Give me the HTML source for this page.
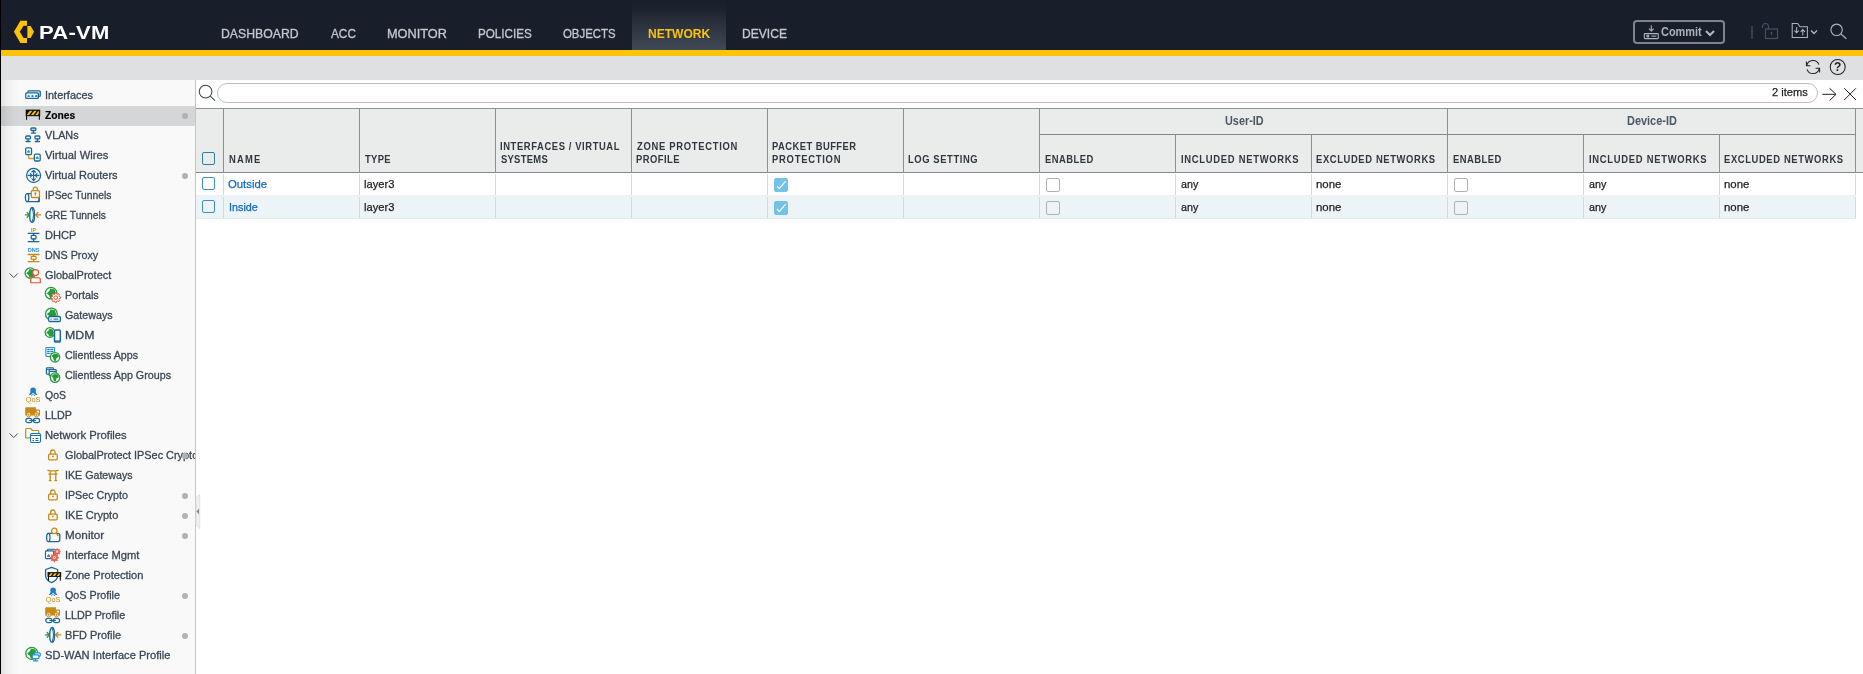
<!DOCTYPE html>
<html lang="en">
<head>
<meta charset="utf-8">
<title>PA-VM</title>
<style>
*{box-sizing:border-box;margin:0;padding:0}
html,body{width:1863px;height:674px;overflow:hidden;background:#fff}
body{font-family:"Liberation Sans",sans-serif;font-size:12px;color:#333;position:relative}
.t{position:absolute;transform-origin:0 0;white-space:nowrap;line-height:1;display:block;text-decoration:none}
svg{position:absolute;display:block;overflow:visible}
#edge{position:absolute;left:0;top:0;width:1px;height:674px;background:#000}
header{position:absolute;left:0;top:0;width:1863px;height:50px;background:#191f2a}
#ybar{position:absolute;left:0;top:50px;width:1863px;height:6px;background:#fdc20a}
#gbar{position:absolute;left:0;top:56px;width:1863px;height:24px;background:#dfe0e2}
#act{position:absolute;left:632px;top:0;width:94px;height:50px;background:linear-gradient(#191f2a 0%,#1c222d 15%,#414956 100%)}
#commit{font:inherit;color:inherit;padding:0;position:absolute;left:1633px;top:20px;width:92px;height:24px;border:2px solid #7d8590;border-radius:4px;background:transparent}
aside{position:absolute;left:1px;top:80px;width:195px;height:594px;background:#f9f9f9;border-right:1px solid #c4c7ca;overflow:hidden}
aside:before{content:"";position:absolute;left:0;top:0;width:18px;height:100%;background:linear-gradient(90deg,rgba(0,0,0,.09),rgba(0,0,0,.035) 40%,rgba(0,0,0,0));z-index:2}
aside ul{list-style:none;position:absolute;left:0;top:6px;width:194px}
aside li{position:relative;height:20px;width:194px}
aside li.sel{background:#d5d6d8}
aside li .t{color:#3a4654;-webkit-text-stroke:0.3px #3a4654}
aside li.sel .t{color:#000;-webkit-text-stroke:0.2px #000}
aside li i{z-index:3;position:absolute;left:181px;top:7px;width:6px;height:6px;border-radius:3px;background:#b2b2b2}
main{position:absolute;left:196px;top:80px;width:1667px;height:594px;background:#fff}
#search{position:absolute;left:21px;top:3px;width:1601px;height:20px;border:1px solid #bcc0c4;border-radius:10px;background:#fff}
table{margin-top:28px;border-collapse:separate;border-spacing:0;table-layout:fixed;width:1667px;border-top:1px solid #8e9398}
th{background:#eaebeb;border-right:1px solid #8a8f95;border-bottom:1px solid #83888e;font-weight:normal;text-align:left;vertical-align:top}
tr.g th{height:64px}
tr.g th.grp{height:26px}
tr.s th{height:38px}
th.last{border-right:0}
td{height:23px;vertical-align:top;background:#fff;background-image:linear-gradient(#d6d9db,#d6d9db);background-repeat:no-repeat;background-size:1px 21px;background-position:right 1px}
tr.odd td{height:23px;box-shadow:inset 0 -1px 0 #efefef}
tr.even td{background-color:#ecf4f8;box-shadow:inset 0 -1px 0 #e6ebee}
td.last{background:#fff !important;border:0 !important;box-shadow:none !important}
.cb{display:block;width:13px;height:13px;border:1.5px solid #3f90bf;border-radius:2px;background:transparent;margin:4px 0 0 6px}
.cb.h{margin-top:43px;border-color:#2a7db0}
.ck{display:block;position:relative;width:14px;height:14px;border:1px solid #adb3b7;border-radius:2px;background:transparent;margin:5px 0 0 6px}
.ck.on{background:#73c3e8;border-color:#73c3e8}
#handle{position:absolute;left:0;top:414px;width:5px;height:36px}
header,aside,main,#gbar{will-change:transform}
.t.d{-webkit-text-stroke:0.25px currentColor}
.t.n{-webkit-text-stroke:0.3px currentColor}
</style>
</head>
<body>
<header>
<div id="logo"><svg style="left:0px;top:0px" width="40" height="50" viewBox="0 0 40 50" ><path fill="#fdc20a" d="M27 20.8H20.4L13.9 31.8 20.4 42.9H27V37.9H23.6L19.8 31.8 23.6 25.8H27z"/><path fill="#fdc20a" d="M27.4 26.1H30.7L34 31.8 30.7 37.9H27.4z"/></svg><span class="t" style="left:38.52px;top:22.72px;letter-spacing:0.224px;transform:scaleX(1.1600);font-size:19px;font-weight:bold;color:#fff">PA-VM</span></div>
<nav><div id="act"></div><a class="t n" style="left:221.04px;top:27.74px;transform:scaleX(1.0206);color:#c3c8cf">DASHBOARD</a><a class="t n" style="left:330.80px;top:27.74px;transform:scaleX(0.9831);color:#c3c8cf">ACC</a><a class="t n" style="left:386.71px;top:27.74px;transform:scaleX(1.0601);color:#c3c8cf">MONITOR</a><a class="t n" style="left:477.79px;top:27.74px;transform:scaleX(0.9701);color:#c3c8cf">POLICIES</a><a class="t n" style="left:563.22px;top:27.74px;transform:scaleX(0.9489);color:#c3c8cf">OBJECTS</a><a class="t" style="left:647.65px;top:27.74px;transform:scaleX(1.0024);font-weight:bold;color:#fdc20a">NETWORK</a><a class="t n" style="left:741.56px;top:27.74px;transform:scaleX(1.0061);color:#c3c8cf">DEVICE</a></nav>
<div id="tools"><button id="commit"><svg style="left:8px;top:2px" width="16" height="16" viewBox="0 0 16 16" ><g fill="none" stroke="#aeb4bc" stroke-width="1.05"><rect x="1.300" y="9.600" width="14" height="5" rx="0.600"/><path d="M8.300 1.200V6.800M5.900 4.600L8.300 7 10.700 4.600"/><rect x="4" y="11.300" width="1.600" height="1.600"/><path d="M8.300 12.100h5"/></g></svg><span class="t" style="left:25.91px;top:4.09px;transform:scaleX(0.9100);font-weight:bold;color:#adb3bb">Commit</span><svg style="left:70px;top:8px" width="10" height="7" viewBox="0 0 10 7" ><path d="M1 1l4 4 4-4" fill="none" stroke="#b3b9c1" stroke-width="2"/></svg></button><svg style="left:1751px;top:26px" width="2" height="13" viewBox="0 0 2 13" ><path d="M1 0v13" stroke="#59626e" stroke-width="1"/></svg><svg style="left:1761px;top:22px" width="18" height="18" viewBox="0 0 18 18" ><g fill="none" stroke="#465060" stroke-width="1.2"><rect x="4.5" y="7" width="12" height="9.5"/><path d="M7.5 7V4.5a3 3 0 0 0-6 0V6"/><circle cx="10.500" cy="10.600" r="0.900" fill="#465060" stroke="none"/><path d="M10.500 11v2" stroke-width="1.1"/></g></svg><svg style="left:1791px;top:22px" width="28" height="18" viewBox="0 0 28 18" ><g fill="none" stroke="#aeb4bc" stroke-width="1.05"><path d="M1.200 15.500V1.500H6.600L9 4.700H16.400V15.500z"/><path d="M5.600 5V10.700M3.400 8.600L5.600 10.800 7.800 8.600M11.800 13.400V7.700M9.600 9.800L11.800 7.600 14 9.800"/><path d="M20 8.500l3 3 3-3" stroke-width="1.400"/></g></svg><svg style="left:1831px;top:22px" width="18" height="18" viewBox="0 0 18 18" ><g fill="none" stroke="#aeb4bc" stroke-width="1.150"><circle cx="5.600" cy="7.800" r="5.700"/><path d="M9.900 12l5.500 4.700"/></g></svg></div>
</header>
<div id="ybar"></div>
<div id="gbar"><svg style="left:1805px;top:3px" width="16" height="16" viewBox="0 0 16 16" ><g fill="none" stroke="#222" stroke-width="1.05"><path d="M1.800 6.400A6.300 6.300 0 0 1 13.900 5.700M14.200 9.600A6.300 6.300 0 0 1 2.100 10.300"/><path d="M1.400 2.600V6.700H5.400M14.600 13.400V9.300H10.600"/></g></svg><svg style="left:1829px;top:3px" width="17" height="17" viewBox="0 0 17 17" ><circle cx="8.700" cy="8" r="7.500" fill="none" stroke="#222" stroke-width="1.05"/><text x="8.700" y="12.300" font-size="12" font-weight="bold" text-anchor="middle" fill="#222" font-family="Liberation Sans, sans-serif">?</text></svg></div>
<aside><ul>
<li><svg style="left:24px;top:2px" width="16" height="16" viewBox="0 0 16 16" ><path fill="none" stroke="#1a6898" stroke-width="1.35" stroke-linejoin="round" stroke-linecap="round" d="M2.95 4.50V3.80a0.9 0.9 0 0 1 0.9-0.9H14.35a0.9 0.9 0 0 1 0.9 0.9V7.50a0.9 0.9 0 0 1-0.9 0.9"/><rect x="0.75" y="4.80" width="12.60" height="5.50" rx="0.9" fill="#fdfdfd" stroke="#1a6898" stroke-width="1.35"/><path fill="#1f84cc" d="M3.7 6.67l1.14 1.14v1.23h-2.28v-1.23z"/><path fill="#1f84cc" d="M7.5 6.67l1.14 1.14v1.23h-2.28v-1.23z"/><path fill="#1f84cc" d="M11.3 6.67l1.14 1.14v1.23h-2.28v-1.23z"/></svg><span class="t" style="left:43.65px;top:4.17px;transform:scaleX(0.9494);font-size:11.5px">Interfaces</span></li>
<li class="sel"><i></i><svg style="left:24px;top:2px" width="16" height="16" viewBox="0 0 16 16" ><rect x="1.1" y="2.0" width="13.7" height="5.8" fill="#111"/><path fill="#f9c31f" d="M4.90 2.7h2.45l-3.30 4.40h-2.45z"/><path fill="#f9c31f" d="M9.27 2.7h2.45l-3.30 4.40h-2.45z"/><path fill="#f9c31f" d="M13.63 2.7h2.45l-3.30 4.40h-2.45z"/><rect x="1.1" y="2.0" width="13.7" height="5.8" fill="none" stroke="#111" stroke-width="0.8"/><path d="M1.55 2.0v9.8M14.35 2.0v9.8" stroke="#111" stroke-width="1.1" fill="none"/></svg><span class="t" style="left:43.74px;top:4.17px;transform:scaleX(0.8940);font-size:11.5px;font-weight:bold">Zones</span></li>
<li><svg style="left:24px;top:2px" width="16" height="16" viewBox="0 0 16 16" ><rect x="5.9" y="0" width="5" height="2.5" rx="0.9" fill="#fcfcfc" stroke="#1a6898" stroke-width="1.35"/><path fill="none" stroke="#1a6898" stroke-width="1.35" stroke-linejoin="round" stroke-linecap="round" d="M8.40 2.5v2.1M6.20 5.10h4.40"/><rect x="0.7" y="8" width="4.8" height="2.8" rx="0.9" fill="#fcfcfc" stroke="#1a6898" stroke-width="1.35"/><path fill="none" stroke="#1a6898" stroke-width="1.35" stroke-linejoin="round" stroke-linecap="round" d="M3.10 10.8v2.2M1.10 13.50h4.00"/><rect x="10" y="8" width="4.8" height="2.8" rx="0.9" fill="#fcfcfc" stroke="#1a6898" stroke-width="1.35"/><path fill="none" stroke="#1a6898" stroke-width="1.35" stroke-linejoin="round" stroke-linecap="round" d="M12.40 10.8v2.2M10.40 13.50h4.00"/></svg><span class="t" style="left:43.90px;top:4.17px;transform:scaleX(0.9370);font-size:11.5px">VLANs</span></li>
<li><svg style="left:24px;top:2px" width="16" height="16" viewBox="0 0 16 16" ><path fill="none" stroke="#d39b2a" stroke-width="1.3" stroke-linejoin="round" stroke-linecap="round" d="M3.500 6.900V9.500a1 1 0 0 0 1 1H8.800"/><rect x="0.700" y="-0.200" width="5.800" height="6.800" rx="1.2" fill="#fff" stroke="#1a6898" stroke-width="1.3"/><rect x="9.400" y="6.200" width="5.800" height="6.800" rx="1.2" fill="#fff" stroke="#1a6898" stroke-width="1.3"/><path fill="#2b8fd3" d="M3.6 1.80l1.38 1.38v1.49h-2.76v-1.49z"/><path fill="#2b8fd3" d="M12.3 8.21l1.38 1.38v1.49h-2.76v-1.49z"/></svg><span class="t" style="left:43.90px;top:4.17px;transform:scaleX(0.9751);font-size:11.5px">Virtual Wires</span></li>
<li><i></i><svg style="left:24px;top:2px" width="16" height="16" viewBox="0 0 16 16" ><circle cx="8.600" cy="7.400" r="7" fill="none" stroke="#1a6898" stroke-width="1.3" stroke-linejoin="round" stroke-linecap="round"/><path fill="none" stroke="#1a6898" stroke-width="1.2" stroke-linejoin="round" stroke-linecap="round" d="M8.600 2.300V12.500M6.900 4L8.600 2.300 10.300 4M6.900 10.800L8.600 12.500 10.300 10.800M3.200 7.400H14M5.300 5.700L7 7.400 5.300 9.100M11.900 5.700L10.200 7.400 11.900 9.100"/></svg><span class="t" style="left:43.90px;top:4.17px;transform:scaleX(0.9564);font-size:11.5px">Virtual Routers</span></li>
<li><svg style="left:24px;top:2px" width="16" height="16" viewBox="0 0 16 16" ><path fill="none" stroke="#1a6898" stroke-width="1.3" stroke-linejoin="round" stroke-linecap="round" d="M2.100 5.600H14.200V13.600H2.100"/><ellipse cx="2.100" cy="9.600" rx="1.700" ry="4" fill="#f9f9f9" stroke="#1a6898" stroke-width="1.3"/><path fill="none" stroke="#1a6898" stroke-width="1.3" stroke-linejoin="round" stroke-linecap="round" d="M14.200 5.600V11.600Q14.200 13.600 12.200 13.600"/><rect x="6.300" y="2.700" width="8.200" height="6.800" rx="1.100" fill="#f9f9f9" stroke="#c68a17" stroke-width="1.300"/><path fill="none" stroke="#c68a17" stroke-width="1.3" stroke-linejoin="round" stroke-linecap="round" d="M8.300 2.600V1.300a2.100 2.100 0 0 1 4.200 0V2.600"/><circle cx="10.400" cy="5.300" r="1.100" fill="#c68a17"/><path d="M10.400 5.500V7.600" stroke="#c68a17" stroke-width="1.100"/></svg><span class="t" style="left:43.60px;top:4.17px;transform:scaleX(0.8960);font-size:11.5px">IPSec Tunnels</span></li>
<li><svg style="left:24px;top:2px" width="16" height="16" viewBox="0 0 16 16" ><ellipse cx="7.100" cy="6.900" rx="2.400" ry="7.400" fill="none" stroke="#1a6898" stroke-width="1.4" stroke-linejoin="round" stroke-linecap="round"/><path fill="none" stroke="#1a6898" stroke-width="1" stroke-linejoin="round" stroke-linecap="round" d="M7.100 0.200Q10 6.900 7.100 13.600"/><path fill="none" stroke="#259b3a" stroke-width="1.3" stroke-linejoin="round" stroke-linecap="round" d="M0.400 6.900H4.200M2.200 4.500L4.400 6.900 2.200 9.300"/><path fill="none" stroke="#c68a17" stroke-width="1.3" stroke-linejoin="round" stroke-linecap="round" d="M15.700 6.900H10.800M12.900 4.500L10.600 6.900 12.900 9.300"/></svg><span class="t" style="left:43.77px;top:4.17px;transform:scaleX(0.8884);font-size:11.5px">GRE Tunnels</span></li>
<li><svg style="left:24px;top:2px" width="16" height="16" viewBox="0 0 16 16" ><text x="8.40" y="3.9" font-family="Liberation Sans, sans-serif" font-weight="bold" font-size="5" fill="#c68a17" text-anchor="middle" transform="scale(1,1)">IP</text><path fill="none" stroke="#1a6898" stroke-width="1.3" stroke-linejoin="round" stroke-linecap="round" d="M3.200 5.300H14M8.600 5.300V7.400M8.600 11V13.600M3.200 13.600H14"/><rect x="6.200" y="7.400" width="4.800" height="3.600" rx="1" fill="none" stroke="#1a6898" stroke-width="1.3" stroke-linejoin="round" stroke-linecap="round"/></svg><span class="t" style="left:43.54px;top:4.17px;transform:scaleX(0.9614);font-size:11.5px">DHCP</span></li>
<li><svg style="left:24px;top:2px" width="16" height="16" viewBox="0 0 16 16" ><text x="8.60" y="4.3" font-family="Liberation Sans, sans-serif" font-weight="bold" font-size="5.6" fill="#2b8fd3" text-anchor="middle" transform="scale(1,1)">DNS</text><path fill="none" stroke="#c68a17" stroke-width="1.3" stroke-linejoin="round" stroke-linecap="round" d="M3.200 6.500H14M8.600 6.500V8.300M8.600 11.400V13.600M3.200 13.600H14"/><rect x="6.200" y="8.300" width="4.800" height="3.100" rx="1" fill="none" stroke="#c68a17" stroke-width="1.3" stroke-linejoin="round" stroke-linecap="round"/></svg><span class="t" style="left:43.56px;top:4.17px;transform:scaleX(0.9353);font-size:11.5px">DNS Proxy</span></li>
<li><svg style="left:8px;top:7px" width="10" height="6" viewBox="0 0 10 6" ><path d="M0.600 0.400l4.100 4.200 4.100-4.200" fill="none" stroke="#4a5562" stroke-width="1"/></svg><svg style="left:24px;top:2px" width="16" height="16" viewBox="0 0 16 16" ><circle cx="5.3" cy="5.1" r="5.2" fill="#fff" stroke="#259b3a" stroke-width="1.3"/><path fill="#259b3a" d="M4.52 0.94l3.90 0.78 1.04 3.64-1.30 3.90-3.64 0.52-1.04-2.86-2.34-1.56 2.60-2.34z"/><path d="M5.700 14.700V11.300a1.600 1.600 0 0 1 1.600-1.600h6.400a1.600 1.600 0 0 1 1.600 1.600V14.700z" fill="#f9f9f9" stroke="#e4502f" stroke-width="1.150" stroke-linejoin="round"/><circle cx="10.600" cy="4.600" r="3" fill="#f9f9f9" stroke="#e4502f" stroke-width="1.150"/></svg><span class="t" style="left:43.74px;top:4.17px;transform:scaleX(0.9505);font-size:11.5px">GlobalProtect</span></li>
<li><svg style="left:44px;top:2px" width="16" height="16" viewBox="0 0 16 16" ><circle cx="6.1" cy="5.2" r="5.8" fill="#fff" stroke="#259b3a" stroke-width="1.3"/><path fill="#259b3a" d="M5.23 0.56l4.35 0.87 1.16 4.06-1.45 4.35-4.06 0.58-1.16-3.19-2.61-1.74 2.90-2.61z"/><path d="M15.66 9.01 L15.66 10.19 L14.29 10.58 L13.96 11.38 L14.65 12.63 L13.83 13.45 L12.58 12.76 L11.78 13.09 L11.39 14.46 L10.21 14.46 L9.82 13.09 L9.02 12.76 L7.77 13.45 L6.95 12.63 L7.64 11.38 L7.31 10.58 L5.94 10.19 L5.94 9.01 L7.31 8.62 L7.64 7.82 L6.95 6.57 L7.77 5.75 L9.02 6.44 L9.82 6.11 L10.21 4.74 L11.39 4.74 L11.78 6.11 L12.58 6.44 L13.83 5.75 L14.65 6.57 L13.96 7.82 L14.29 8.62z" fill="#fff" stroke="#e4502f" stroke-width="1" stroke-linejoin="round"/><circle cx="10.8" cy="9.6" r="1.76" fill="#fff" stroke="#e4502f" stroke-width="1"/></svg><span class="t" style="left:63.65px;top:4.17px;transform:scaleX(0.9440);font-size:11.5px">Portals</span></li>
<li><svg style="left:44px;top:2px" width="16" height="16" viewBox="0 0 16 16" ><circle cx="6.4" cy="6" r="5.9" fill="#fff" stroke="#259b3a" stroke-width="1.3"/><path fill="#259b3a" d="M5.52 1.28l4.43 0.89 1.18 4.13-1.48 4.43-4.13 0.59-1.18-3.25-2.66-1.77 2.95-2.66z"/><rect x="3.600" y="8.500" width="11.800" height="5" rx="1.300" fill="#fff" stroke="#1a6898" stroke-width="1.300"/><rect x="5.500" y="10.500" width="1.200" height="1.200" fill="#1a6898"/><path d="M8.500 11.100H13.300" stroke="#1a6898" stroke-width="1.100"/></svg><span class="t" style="left:63.75px;top:4.17px;transform:scaleX(0.9306);font-size:11.5px">Gateways</span></li>
<li><svg style="left:44px;top:2px" width="16" height="16" viewBox="0 0 16 16" ><circle cx="5" cy="4.5" r="4.8" fill="#fff" stroke="#259b3a" stroke-width="1.3"/><path fill="#259b3a" d="M4.28 0.66l3.60 0.72 0.96 3.36-1.20 3.60-3.36 0.48-0.96-2.64-2.16-1.44 2.40-2.16z"/><rect x="9.500" y="2.100" width="5.800" height="12" rx="1.200" fill="#fff" stroke="#1a6898" stroke-width="1.500"/><path d="M9.500 12.400h5.800v1.200h-5.800z" fill="#1a6898"/></svg><span class="t" style="left:63.54px;top:4.17px;transform:scaleX(1.0702);font-size:11.5px">MDM</span></li>
<li><svg style="left:44px;top:2px" width="16" height="16" viewBox="0 0 16 16" ><rect x="0.9" y="-0.5" width="8.6" height="8.8" rx="0.800" fill="#fff" stroke="#2b8fd3" stroke-width="1.200"/><path d="M2.2 1.40h2.58M5.37 1.40h2.92" stroke="#1d7cc0" stroke-width="1.1"/><path d="M2.2 3.40h2.58M5.37 3.40h2.92" stroke="#1d7cc0" stroke-width="1.1"/><path d="M2.2 5.40h2.58M5.37 5.40h2.92" stroke="#1d7cc0" stroke-width="1.1"/><circle cx="10" cy="9.3" r="4.7" fill="#fff" stroke="#259b3a" stroke-width="1.3"/><path fill="#259b3a" d="M6.47 7.66l2.82-1.88 4.23 0.47 0.24 2.59-2.35 1.41-0.47 2.82-2.12-0.47-0.70-2.82z"/></svg><span class="t" style="left:63.75px;top:4.17px;transform:scaleX(0.9297);font-size:11.5px">Clientless Apps</span></li>
<li><svg style="left:44px;top:2px" width="16" height="16" viewBox="0 0 16 16" ><rect x="1.400" y="-0.100" width="7" height="6.200" rx="0.800" fill="#fff" stroke="#1a6898" stroke-width="1.200"/><path d="M1.400 1.700h7" stroke="#1a6898" stroke-width="1"/><rect x="4.200" y="1.700" width="7" height="6.200" rx="0.800" fill="#fff" stroke="#1a6898" stroke-width="1.200"/><path d="M4.200 3.500h7" stroke="#1a6898" stroke-width="1"/><circle cx="10" cy="9.6" r="4.7" fill="#fff" stroke="#259b3a" stroke-width="1.3"/><path fill="#259b3a" d="M6.47 7.96l2.82-1.88 4.23 0.47 0.24 2.59-2.35 1.41-0.47 2.82-2.12-0.47-0.70-2.82z"/></svg><span class="t" style="left:63.75px;top:4.17px;transform:scaleX(0.9316);font-size:11.5px">Clientless App Groups</span></li>
<li><svg style="left:24px;top:2px" width="16" height="16" viewBox="0 0 16 16" ><circle cx="8.100" cy="2.300" r="2.800" fill="#1f7fc4"/><path fill="#1f7fc4" d="M6 3.600L3.700 7.300 6 6.800 6.900 8.300 8.100 5.600 9.300 8.300 10.200 6.800 12.500 7.300 10.200 3.600z"/><path d="M6.500 6.600L8.100 5 9.700 6.600" fill="none" stroke="#f9f9f9" stroke-width="0.8" stroke-linejoin="round" stroke-linecap="round"/><text x="8.80" y="13.8" font-family="Liberation Sans, sans-serif" font-weight="normal" font-size="8" fill="#c68a17" text-anchor="middle" transform="scale(0.92,1)">QoS</text></svg><span class="t" style="left:43.76px;top:4.17px;transform:scaleX(0.9095);font-size:11.5px">QoS</span></li>
<li><svg style="left:24px;top:2px" width="16" height="16" viewBox="0 0 16 16" ><path fill="#c68a17" d="M0.200 0.200a1 1 0 0 1 1-1H10.900V1.500H14a1 1 0 0 1 1 1V7.600H0.200z"/><rect x="11.800" y="2.700" width="2.200" height="2" fill="#f9f9f9"/><circle cx="3.700" cy="6.700" r="2.200" fill="#f9f9f9" stroke="#c68a17" stroke-width="0.900"/><circle cx="11.500" cy="6.700" r="2.200" fill="#f9f9f9" stroke="#c68a17" stroke-width="0.900"/><path d="M2.300 6.700h2.800M3.700 5.300v2.800M10.100 6.700h2.800M11.500 5.300v2.800" stroke="#c68a17" stroke-width="0.800"/><rect x="0.800" y="10.400" width="6.200" height="4.200" rx="2.100" fill="none" stroke="#1a6898" stroke-width="1.2" stroke-linejoin="round" stroke-linecap="round"/><rect x="8.400" y="10.400" width="6.200" height="4.200" rx="2.100" fill="none" stroke="#1a6898" stroke-width="1.2" stroke-linejoin="round" stroke-linecap="round"/><path d="M4.800 12.500H10.600" fill="none" stroke="#1a6898" stroke-width="1.2" stroke-linejoin="round" stroke-linecap="round"/></svg><span class="t" style="left:43.56px;top:4.17px;transform:scaleX(0.9311);font-size:11.5px">LLDP</span></li>
<li><svg style="left:8px;top:7px" width="10" height="6" viewBox="0 0 10 6" ><path d="M0.600 0.400l4.100 4.200 4.100-4.200" fill="none" stroke="#4a5562" stroke-width="1"/></svg><svg style="left:24px;top:2px" width="16" height="16" viewBox="0 0 16 16" ><path fill="none" stroke="#c68a17" stroke-width="1.2" stroke-linejoin="round" stroke-linecap="round" d="M0.700 9.800V1.300a0.800 0.800 0 0 1 0.800-0.800H5.600L7.600 2.500H13a0.800 0.800 0 0 1 0.800 0.800V5M0.700 9.800H5"/><rect x="5.500" y="5.500" width="10" height="9" rx="1.400" fill="#fff" stroke="#1872b4" stroke-width="1.100"/><path d="M5.500 7.500h10" stroke="#1872b4" stroke-width="1"/><path d="M7.500 10.500h1.500M10.500 10.500h3M7.500 12.500h1.500M10.500 12.500h3" stroke="#1872b4" stroke-width="1"/></svg><span class="t" style="left:43.52px;top:4.17px;transform:scaleX(0.9762);font-size:11.5px">Network Profiles</span></li>
<li><i></i><svg style="left:44px;top:2px" width="16" height="16" viewBox="0 0 16 16" ><g transform="translate(0,0)"><rect x="3.6" y="6.1" width="8.6" height="5.800" rx="1.1" fill="none" stroke="#c68a17" stroke-width="1.3" stroke-linejoin="round" stroke-linecap="round"/><path fill="none" stroke="#c68a17" stroke-width="1.3" stroke-linejoin="round" stroke-linecap="round" d="M5.700 6V4.200a2.200 2.200 0 0 1 4.400 0V6"/><rect x="7.100" y="7.600" width="1.600" height="1.600" fill="#c68a17"/></g></svg><span class="t" style="left:63.74px;top:4.17px;transform:scaleX(0.9473);font-size:11.5px">GlobalProtect IPSec Crypto</span></li>
<li><svg style="left:44px;top:2px" width="16" height="16" viewBox="0 0 16 16" ><path fill="none" stroke="#c68a17" stroke-width="1.3" stroke-linejoin="round" stroke-linecap="round" d="M2.900 2.300Q8 3.400 13.100 2.300M3.800 6.100H12.200M5.200 3V12.500M10.800 3V12.500M4.300 12.600H6.100M9.900 12.600H11.700"/></svg><span class="t" style="left:63.67px;top:4.17px;transform:scaleX(0.9273);font-size:11.5px">IKE Gateways</span></li>
<li><i></i><svg style="left:44px;top:2px" width="16" height="16" viewBox="0 0 16 16" ><g transform="translate(0,0)"><rect x="3.6" y="6.1" width="8.6" height="5.800" rx="1.1" fill="none" stroke="#c68a17" stroke-width="1.3" stroke-linejoin="round" stroke-linecap="round"/><path fill="none" stroke="#c68a17" stroke-width="1.3" stroke-linejoin="round" stroke-linecap="round" d="M5.700 6V4.200a2.200 2.200 0 0 1 4.400 0V6"/><rect x="7.100" y="7.600" width="1.600" height="1.600" fill="#c68a17"/></g></svg><span class="t" style="left:63.67px;top:4.17px;transform:scaleX(0.9279);font-size:11.5px">IPSec Crypto</span></li>
<li><i></i><svg style="left:44px;top:2px" width="16" height="16" viewBox="0 0 16 16" ><g transform="translate(0,0)"><rect x="3.6" y="6.1" width="8.6" height="5.800" rx="1.1" fill="none" stroke="#c68a17" stroke-width="1.3" stroke-linejoin="round" stroke-linecap="round"/><path fill="none" stroke="#c68a17" stroke-width="1.3" stroke-linejoin="round" stroke-linecap="round" d="M5.700 6V4.200a2.200 2.200 0 0 1 4.400 0V6"/><rect x="7.100" y="7.600" width="1.600" height="1.600" fill="#c68a17"/></g></svg><span class="t" style="left:63.64px;top:4.17px;transform:scaleX(0.9587);font-size:11.5px">IKE Crypto</span></li>
<li><i></i><svg style="left:44px;top:2px" width="16" height="16" viewBox="0 0 16 16" ><path fill="none" stroke="#1a6898" stroke-width="1.3" stroke-linejoin="round" stroke-linecap="round" d="M3.300 5.300H12.800Q14.800 5.300 14.800 7.300V11.600Q14.800 13.600 12.800 13.600H3.300"/><ellipse cx="3.300" cy="9.450" rx="1.700" ry="4.150" fill="#f9f9f9" stroke="#1a6898" stroke-width="1.3"/><circle cx="9.300" cy="2.900" r="2.700" fill="#f9f9f9" stroke="#c68a17" stroke-width="1.300"/><path d="M11.200 4.900L13 7.600" stroke="#c68a17" stroke-width="1.500" stroke-linecap="round"/></svg><span class="t" style="left:63.58px;top:4.17px;transform:scaleX(1.0230);font-size:11.5px">Monitor</span></li>
<li><svg style="left:44px;top:2px" width="16" height="16" viewBox="0 0 16 16" ><path fill="none" stroke="#1a6898" stroke-width="1.15" stroke-linejoin="round" stroke-linecap="round" d="M2.50 2.60V2.10a0.9 0.9 0 0 1 0.9-0.9H9.40a0.9 0.9 0 0 1 0.9 0.9V8.00a0.9 0.9 0 0 1-0.9 0.9"/><rect x="0.50" y="2.90" width="8.10" height="7.70" rx="0.9" fill="#fdfdfd" stroke="#1a6898" stroke-width="1.15"/><path fill="#2b8fd3" d="M3.6 6.04l1.44 1.44v1.56h-2.88v-1.56z"/><path d="M15.67 3.25 L15.67 4.15 L14.84 4.41 L14.57 5.06 L14.97 5.83 L14.33 6.47 L13.56 6.07 L12.91 6.34 L12.65 7.17 L11.75 7.17 L11.49 6.34 L10.84 6.07 L10.07 6.47 L9.43 5.83 L9.83 5.06 L9.56 4.41 L8.73 4.15 L8.73 3.25 L9.56 2.99 L9.83 2.34 L9.43 1.57 L10.07 0.93 L10.84 1.33 L11.49 1.06 L11.75 0.23 L12.65 0.23 L12.91 1.06 L13.56 1.33 L14.33 0.93 L14.97 1.57 L14.57 2.34 L14.84 2.99z" fill="#e9624b"/><circle cx="12.2" cy="3.7" r="1.10" fill="#fff"/><path d="M13.86 9.12 L13.86 10.28 L12.79 10.61 L12.44 11.45 L12.97 12.44 L12.14 13.27 L11.15 12.74 L10.31 13.09 L9.98 14.16 L8.82 14.16 L8.49 13.09 L7.65 12.74 L6.66 13.27 L5.83 12.44 L6.36 11.45 L6.01 10.61 L4.94 10.28 L4.94 9.12 L6.01 8.79 L6.36 7.95 L5.83 6.96 L6.66 6.13 L7.65 6.66 L8.49 6.31 L8.82 5.24 L9.98 5.24 L10.31 6.31 L11.15 6.66 L12.14 6.13 L12.97 6.96 L12.44 7.95 L12.79 8.79z" fill="#e9624b"/><circle cx="9.4" cy="9.7" r="1.40" fill="#fff"/><circle cx="12.200" cy="3.700" r="0.500" fill="#e4502f"/><circle cx="9.400" cy="9.700" r="0.600" fill="#e4502f"/></svg><span class="t" style="left:63.63px;top:4.17px;transform:scaleX(0.9705);font-size:11.5px">Interface Mgmt</span></li>
<li><svg style="left:44px;top:2px" width="16" height="16" viewBox="0 0 16 16" ><path fill="none" stroke="#1a6898" stroke-width="1.3" stroke-linejoin="round" stroke-linecap="round" d="M6.600 -0.600L12.600 1.500V7.500Q12.600 12 6.600 14.600Q0.600 12 0.600 7.500V1.500z"/><rect x="3" y="4.5" width="12.8" height="4.1" fill="#111"/><path fill="#f9c31f" d="M5.53 5.2h2.28l-2.02 2.70h-2.28z"/><path fill="#f9c31f" d="M9.59 5.2h2.28l-2.02 2.70h-2.28z"/><path fill="#f9c31f" d="M13.66 5.2h2.28l-2.02 2.70h-2.28z"/><rect x="3" y="4.5" width="12.8" height="4.1" fill="none" stroke="#111" stroke-width="0.8"/><path d="M3.45 4.5v8.3M15.350000000000001 4.5v8.3" stroke="#111" stroke-width="1.1" fill="none"/></svg><span class="t" style="left:63.55px;top:4.17px;transform:scaleX(0.9647);font-size:11.5px">Zone Protection</span></li>
<li><i></i><svg style="left:44px;top:2px" width="16" height="16" viewBox="0 0 16 16" ><circle cx="8.100" cy="2.300" r="2.800" fill="#1f7fc4"/><path fill="#1f7fc4" d="M6 3.600L3.700 7.300 6 6.800 6.900 8.300 8.100 5.600 9.300 8.300 10.200 6.800 12.500 7.300 10.200 3.600z"/><path d="M6.500 6.600L8.100 5 9.700 6.600" fill="none" stroke="#f9f9f9" stroke-width="0.8" stroke-linejoin="round" stroke-linecap="round"/><text x="8.80" y="13.8" font-family="Liberation Sans, sans-serif" font-weight="normal" font-size="8" fill="#c68a17" text-anchor="middle" transform="scale(0.92,1)">QoS</text></svg><span class="t" style="left:64.00px;top:4.17px;transform:scaleX(0.9343);font-size:11.5px">QoS Profile</span></li>
<li><svg style="left:44px;top:2px" width="16" height="16" viewBox="0 0 16 16" ><path fill="#c68a17" d="M0.200 0.200a1 1 0 0 1 1-1H10.900V1.500H14a1 1 0 0 1 1 1V7.600H0.200z"/><rect x="11.800" y="2.700" width="2.200" height="2" fill="#f9f9f9"/><circle cx="3.700" cy="6.700" r="2.200" fill="#f9f9f9" stroke="#c68a17" stroke-width="0.900"/><circle cx="11.500" cy="6.700" r="2.200" fill="#f9f9f9" stroke="#c68a17" stroke-width="0.900"/><path d="M2.300 6.700h2.800M3.700 5.300v2.800M10.100 6.700h2.800M11.500 5.300v2.800" stroke="#c68a17" stroke-width="0.800"/><rect x="0.800" y="10.400" width="6.200" height="4.200" rx="2.100" fill="none" stroke="#1a6898" stroke-width="1.2" stroke-linejoin="round" stroke-linecap="round"/><rect x="8.400" y="10.400" width="6.200" height="4.200" rx="2.100" fill="none" stroke="#1a6898" stroke-width="1.2" stroke-linejoin="round" stroke-linecap="round"/><path d="M4.800 12.500H10.600" fill="none" stroke="#1a6898" stroke-width="1.2" stroke-linejoin="round" stroke-linecap="round"/></svg><span class="t" style="left:63.56px;top:4.17px;transform:scaleX(0.9352);font-size:11.5px">LLDP Profile</span></li>
<li><i></i><svg style="left:44px;top:2px" width="16" height="16" viewBox="0 0 16 16" ><ellipse cx="7.100" cy="6.900" rx="2.400" ry="7.400" fill="none" stroke="#1a6898" stroke-width="1.4" stroke-linejoin="round" stroke-linecap="round"/><path fill="none" stroke="#1a6898" stroke-width="1" stroke-linejoin="round" stroke-linecap="round" d="M7.100 0.200Q10 6.900 7.100 13.600"/><path fill="none" stroke="#259b3a" stroke-width="1.3" stroke-linejoin="round" stroke-linecap="round" d="M0.400 6.900H4.200M2.200 4.500L4.400 6.900 2.200 9.300"/><path fill="none" stroke="#c68a17" stroke-width="1.3" stroke-linejoin="round" stroke-linecap="round" d="M15.700 6.900H10.800M12.900 4.500L10.600 6.900 12.900 9.300"/></svg><span class="t" style="left:63.64px;top:4.17px;transform:scaleX(0.9525);font-size:11.5px">BFD Profile</span></li>
<li><svg style="left:24px;top:2px" width="16" height="16" viewBox="0 0 16 16" ><circle cx="6.8" cy="5.4" r="6" fill="#fff" stroke="#259b3a" stroke-width="1.3"/><path fill="#259b3a" d="M5.90 0.60l4.50 0.90 1.20 4.20-1.50 4.50-4.20 0.60-1.20-3.30-2.70-1.80 3.00-2.70z"/><rect x="9.3" y="4.8" width="6" height="3.3" rx="0.9" fill="#fcfcfc" stroke="#2b8fd3" stroke-width="1.2"/><rect x="7.3" y="6.8" width="6.6" height="3.8" rx="0.9" fill="#fcfcfc" stroke="#2b8fd3" stroke-width="1.2"/><path fill="none" stroke="#2b8fd3" stroke-width="1.2" stroke-linejoin="round" stroke-linecap="round" d="M10.60 10.6v1.7M8.40 12.80h4.40"/></svg><span class="t" style="left:43.80px;top:4.17px;transform:scaleX(0.9646);font-size:11.5px">SD-WAN Interface Profile</span></li>
</ul></aside>
<main>
<div id="sbar"><svg style="left:2px;top:4px" width="18" height="18" viewBox="0 0 18 18" ><g fill="none" stroke="#3f4751" stroke-width="1.05"><circle cx="7.6" cy="7.6" r="6.35"/><path d="M12.2 12.1l4.900 4.600"/></g></svg><div id="search"><span class="t d" style="left:1554.23px;top:2.87px;transform:scaleX(0.9677);font-size:11.5px;color:#222">2 items</span></div><svg style="left:1626px;top:8px" width="16" height="13" viewBox="0 0 16 13" ><path d="M0.300 6.300h13.600M7.600 0.300l6.400 6-6.400 6.200" fill="none" stroke="#222" stroke-width="1"/></svg><svg style="left:1648px;top:8px" width="13" height="13" viewBox="0 0 13 13" ><path d="M0.300 0.300l11.600 11.600M11.900 0.300L0.300 11.900" fill="none" stroke="#222" stroke-width="1"/></svg></div>
<table><colgroup><col style="width:28px"><col style="width:136px"><col style="width:136px"><col style="width:136px"><col style="width:136px"><col style="width:136px"><col style="width:136px"><col style="width:136px"><col style="width:136px"><col style="width:136px"><col style="width:136px"><col style="width:136px"><col style="width:136px"><col style="width:7px"></colgroup>
<thead><tr class="g">
<th rowspan="2"><b class="cb h"></b></th>
<th rowspan="2"><span class="t" style="left:32.66px;top:74.84px;letter-spacing:1.297px;transform:scaleX(0.9400);font-size:10px;font-weight:bold;color:#30373f">NAME</span></th>
<th rowspan="2"><span class="t" style="left:169.25px;top:74.84px;letter-spacing:0.336px;transform:scaleX(0.9400);font-size:10px;font-weight:bold;color:#30373f">TYPE</span></th>
<th rowspan="2"><span class="t" style="left:304.41px;top:62.23px;letter-spacing:0.638px;transform:scaleX(0.9400);font-size:10px;font-weight:bold;color:#30373f">INTERFACES / VIRTUAL</span><br><span class="t" style="left:304.85px;top:74.84px;letter-spacing:0.306px;transform:scaleX(0.9400);font-size:10px;font-weight:bold;color:#30373f">SYSTEMS</span></th>
<th rowspan="2"><span class="t" style="left:440.85px;top:62.23px;letter-spacing:0.754px;transform:scaleX(0.9400);font-size:10px;font-weight:bold;color:#30373f">ZONE PROTECTION</span><br><span class="t" style="left:440.41px;top:74.84px;letter-spacing:0.505px;transform:scaleX(0.9400);font-size:10px;font-weight:bold;color:#30373f">PROFILE</span></th>
<th rowspan="2"><span class="t" style="left:576.41px;top:62.23px;letter-spacing:0.473px;transform:scaleX(0.9400);font-size:10px;font-weight:bold;color:#30373f">PACKET BUFFER</span><br><span class="t" style="left:576.41px;top:74.84px;letter-spacing:0.808px;transform:scaleX(0.9400);font-size:10px;font-weight:bold;color:#30373f">PROTECTION</span></th>
<th rowspan="2"><span class="t" style="left:712.16px;top:74.84px;letter-spacing:0.631px;transform:scaleX(0.9400);font-size:10px;font-weight:bold;color:#30373f">LOG SETTING</span></th>
<th colspan="3" class="grp"><span class="t" style="left:1028.74px;top:35.09px;transform:scaleX(0.9053);font-weight:bold;color:#4d5864">User-ID</span></th>
<th colspan="3" class="grp"><span class="t" style="left:1430.82px;top:35.09px;transform:scaleX(0.9108);font-weight:bold;color:#4d5864">Device-ID</span></th>
<th rowspan="2" class="last"></th></tr><tr class="s">
<th><span class="t" style="left:848.91px;top:74.84px;letter-spacing:0.528px;transform:scaleX(0.9400);font-size:10px;font-weight:bold;color:#30373f">ENABLED</span></th>
<th><span class="t" style="left:984.66px;top:74.84px;letter-spacing:0.770px;transform:scaleX(0.9400);font-size:10px;font-weight:bold;color:#30373f">INCLUDED NETWORKS</span></th>
<th><span class="t" style="left:1120.41px;top:74.84px;letter-spacing:0.661px;transform:scaleX(0.9400);font-size:10px;font-weight:bold;color:#30373f">EXCLUDED NETWORKS</span></th>
<th><span class="t" style="left:1256.91px;top:74.84px;letter-spacing:0.528px;transform:scaleX(0.9400);font-size:10px;font-weight:bold;color:#30373f">ENABLED</span></th>
<th><span class="t" style="left:1392.66px;top:74.84px;letter-spacing:0.770px;transform:scaleX(0.9400);font-size:10px;font-weight:bold;color:#30373f">INCLUDED NETWORKS</span></th>
<th><span class="t" style="left:1528.41px;top:74.84px;letter-spacing:0.661px;transform:scaleX(0.9400);font-size:10px;font-weight:bold;color:#30373f">EXCLUDED NETWORKS</span></th>
</tr></thead><tbody>
<tr class="odd">
<td><b class="cb"></b></td>
<td><a class="t d" style="left:32.47px;top:98.97px;transform:scaleX(0.9838);font-size:11.5px;color:#0f66c4">Outside</a></td><td><span class="t d" style="left:168.30px;top:98.97px;transform:scaleX(0.9706);font-size:11.5px;color:#1c1c1c">layer3</span></td><td></td><td></td><td><b class="ck on"><svg style="left:-1px;top:-1px" width="14" height="14" viewBox="0 0 14 14"><path d="M3 8.200l2.200 2.400L11.650 3.200" fill="none" stroke="#fff" stroke-width="1.1"/></svg></b></td><td></td>
<td><b class="ck"></b></td><td><span class="t d" style="left:984.66px;top:98.97px;transform:scaleX(0.9350);font-size:11.5px;color:#1c1c1c">any</span></td><td><span class="t d" style="left:1120.09px;top:98.97px;transform:scaleX(0.9919);font-size:11.5px;color:#1c1c1c">none</span></td>
<td><b class="ck"></b></td><td><span class="t d" style="left:1392.66px;top:98.97px;transform:scaleX(0.9350);font-size:11.5px;color:#1c1c1c">any</span></td><td><span class="t d" style="left:1528.09px;top:98.97px;transform:scaleX(0.9919);font-size:11.5px;color:#1c1c1c">none</span></td><td class="last"></td>
</tr>
<tr class="even">
<td><b class="cb"></b></td>
<td><a class="t d" style="left:32.76px;top:122.17px;transform:scaleX(0.9378);font-size:11.5px;color:#0f66c4">Inside</a></td><td><span class="t d" style="left:168.30px;top:122.17px;transform:scaleX(0.9706);font-size:11.5px;color:#1c1c1c">layer3</span></td><td></td><td></td><td><b class="ck on"><svg style="left:-1px;top:-1px" width="14" height="14" viewBox="0 0 14 14"><path d="M3 8.200l2.200 2.400L11.650 3.200" fill="none" stroke="#fff" stroke-width="1.1"/></svg></b></td><td></td>
<td><b class="ck"></b></td><td><span class="t d" style="left:984.66px;top:122.17px;transform:scaleX(0.9350);font-size:11.5px;color:#1c1c1c">any</span></td><td><span class="t d" style="left:1120.09px;top:122.17px;transform:scaleX(0.9919);font-size:11.5px;color:#1c1c1c">none</span></td>
<td><b class="ck"></b></td><td><span class="t d" style="left:1392.66px;top:122.17px;transform:scaleX(0.9350);font-size:11.5px;color:#1c1c1c">any</span></td><td><span class="t d" style="left:1528.09px;top:122.17px;transform:scaleX(0.9919);font-size:11.5px;color:#1c1c1c">none</span></td><td class="last"></td>
</tr>
</tbody></table>
<div id="handle"><svg style="left:0px;top:0px" width="5" height="36" viewBox="0 0 5 36" ><path d="M0 3.500L3.700 0.500V34.500L0 31z" fill="#f1f1f1" stroke="#dcdcdc" stroke-width="0.800"/><path d="M0.400 17.400L3 14.600V20.200z" fill="#8a8a8a"/></svg></div>
</main>
<div id="edge"></div>
</body>
</html>
